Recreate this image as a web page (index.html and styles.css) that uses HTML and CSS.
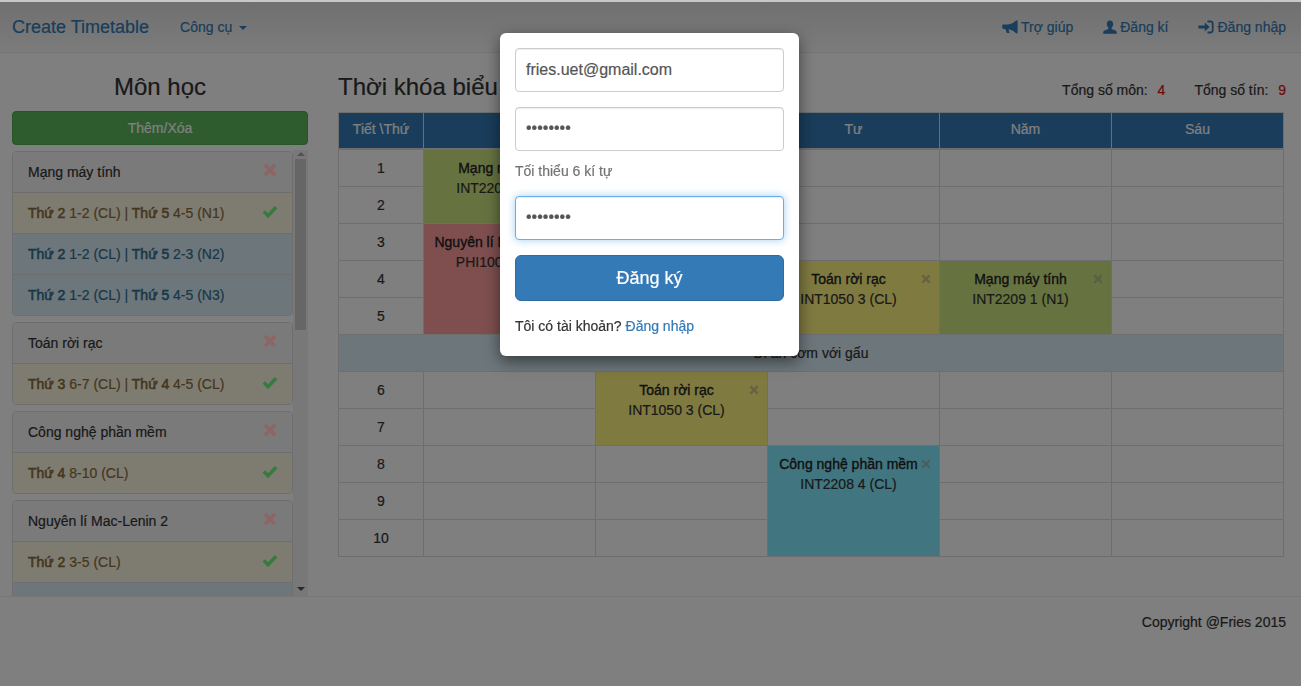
FILE: index.html
```html
<!DOCTYPE html>
<html lang="vi">
<head>
  <meta charset="UTF-8">
  <title>Create Timetable</title>
  <link rel="stylesheet" href="styles.css">
</head>
<body>
  <svg class="icon-defs" aria-hidden="true">
    <symbol id="i-remove" viewBox="0 0 14 14"><path d="M3.2 0.8 7 4.6 10.8 0.8 13.2 3.2 9.4 7 13.2 10.8 10.8 13.2 7 9.4 3.2 13.2 0.8 10.8 4.6 7 0.8 3.2Z"/></symbol>
    <symbol id="i-ok" viewBox="0 0 16 14"><path d="M0.6 7.6 3 5.2 6 8.2 12.8 1 15.4 3.4 6 13.2Z"/></symbol>
    <symbol id="i-bullhorn" viewBox="0 0 16 14"><path d="M14 0.6h1.6v12.6H14C12 11 9 9.4 6.4 9.2L7.6 13H4.8L3.4 9H1.6C0.7 9 0.2 8.2 0.2 7V6.2C0.2 5 0.7 4.4 1.6 4.4H6C9 4.4 12 2.8 14 0.6Z"/></symbol>
    <symbol id="i-user" viewBox="0 0 14 14"><path d="M7 0.4C9 0.4 10.2 2 10.2 4 10.2 5.8 9.2 7.2 8.6 7.8V9C10 9.6 13.6 10.4 13.8 12.2V13.8H0.2V12.2C0.4 10.4 4 9.6 5.4 9V7.8C4.8 7.2 3.8 5.8 3.8 4 3.8 2 5 0.4 7 0.4Z"/></symbol>
    <symbol id="i-login" viewBox="0 0 16 14"><path d="M9.5 0.6h3.2C14.4 0.6 15.6 1.8 15.6 3.4v7.2c0 1.6-1.2 2.8-2.9 2.8H9.5v-1.8h3c0.8 0 1.3-.5 1.3-1.2V3.6c0-.7-.5-1.2-1.3-1.2h-3ZM6.8 2.6 11.6 7 6.8 11.4V8.6H0.4V5.4h6.4Z"/></symbol>
  </svg>

  <nav class="navbar">
    <a class="brand">Create Timetable</a>
    <a class="nav-link tools">Công cụ <span class="caret"></span></a>
    <div class="nav-right">
      <a class="nav-link"><svg class="nav-icon"><use href="#i-bullhorn"/></svg> Trợ giúp</a>
      <a class="nav-link"><svg class="nav-icon user"><use href="#i-user"/></svg> Đăng kí</a>
      <a class="nav-link"><svg class="nav-icon"><use href="#i-login"/></svg> Đăng nhập</a>
    </div>
  </nav>

  <main class="main">
    <aside class="sidebar">
      <h3 class="sidebar-title">Môn học</h3>
      <button class="btn-add">Thêm/Xóa</button>
      <div class="course-scroll">
        <div class="course-list">
          <div class="course">
            <div class="course-head">Mạng máy tính <svg class="ic-remove"><use href="#i-remove"/></svg></div>
            <div class="course-item warn"><span><b>Thứ 2</b> 1-2 (CL) | <b>Thứ 5</b> 4-5 (N1)</span> <svg class="ic-ok"><use href="#i-ok"/></svg></div>
            <div class="course-item info"><span><b>Thứ 2</b> 1-2 (CL) | <b>Thứ 5</b> 2-3 (N2)</span></div>
            <div class="course-item info"><span><b>Thứ 2</b> 1-2 (CL) | <b>Thứ 5</b> 4-5 (N3)</span></div>
          </div>
          <div class="course">
            <div class="course-head">Toán rời rạc <svg class="ic-remove"><use href="#i-remove"/></svg></div>
            <div class="course-item warn"><span><b>Thứ 3</b> 6-7 (CL) | <b>Thứ 4</b> 4-5 (CL)</span> <svg class="ic-ok"><use href="#i-ok"/></svg></div>
          </div>
          <div class="course">
            <div class="course-head">Công nghệ phần mềm <svg class="ic-remove"><use href="#i-remove"/></svg></div>
            <div class="course-item warn"><span><b>Thứ 4</b> 8-10 (CL)</span> <svg class="ic-ok"><use href="#i-ok"/></svg></div>
          </div>
          <div class="course">
            <div class="course-head">Nguyên lí Mac-Lenin 2 <svg class="ic-remove"><use href="#i-remove"/></svg></div>
            <div class="course-item warn"><span><b>Thứ 2</b> 3-5 (CL)</span> <svg class="ic-ok"><use href="#i-ok"/></svg></div>
            <div class="course-item info"></div>
          </div>
        </div>
        <div class="scrollbar">
          <span class="arrow-up"></span>
          <span class="thumb"></span>
          <span class="arrow-down"></span>
        </div>
      </div>
    </aside>

    <section class="timetable">
      <div class="timetable-top">
        <h3 class="timetable-title">Thời khóa biểu</h3>
        <div class="totals">
          <span>Tổng số môn: <em>4</em></span>
          <span>Tổng số tín: <em>9</em></span>
        </div>
      </div>
      <table class="table">
        <colgroup>
          <col class="col-period">
          <col><col><col><col><col>
        </colgroup>
        <thead>
          <tr><th>Tiết \Thứ</th><th>Hai</th><th>Ba</th><th>Tư</th><th>Năm</th><th>Sáu</th></tr>
        </thead>
        <tbody>
          <tr>
            <td>1</td>
            <td rowspan="2" class="slot green"><div class="slot-body"><div class="slot-text"><strong>Mạng máy tính</strong><br>INT2209 1 (CL)</div><svg class="ic-close"><use href="#i-remove"/></svg></div></td>
            <td></td><td></td><td></td><td></td>
          </tr>
          <tr><td>2</td><td></td><td></td><td></td><td></td></tr>
          <tr>
            <td>3</td>
            <td rowspan="3" class="slot red"><div class="slot-body"><div class="slot-text"><strong>Nguyên lí Mac-Lenin 2</strong><br>PHI1005 5 (CL)</div><svg class="ic-close"><use href="#i-remove"/></svg></div></td>
            <td></td><td></td><td></td><td></td>
          </tr>
          <tr>
            <td>4</td>
            <td></td>
            <td rowspan="2" class="slot yellow"><div class="slot-body"><div class="slot-text"><strong>Toán rời rạc</strong><br>INT1050 3 (CL)</div><svg class="ic-close"><use href="#i-remove"/></svg></div></td>
            <td rowspan="2" class="slot green"><div class="slot-body"><div class="slot-text"><strong>Mạng máy tính</strong><br>INT2209 1 (N1)</div><svg class="ic-close"><use href="#i-remove"/></svg></div></td>
            <td></td>
          </tr>
          <tr><td>5</td><td></td><td></td></tr>
          <tr><td colspan="6" class="lunch">Đi ăn cơm với gấu</td></tr>
          <tr>
            <td>6</td>
            <td></td>
            <td rowspan="2" class="slot yellow"><div class="slot-body"><div class="slot-text"><strong>Toán rời rạc</strong><br>INT1050 3 (CL)</div><svg class="ic-close"><use href="#i-remove"/></svg></div></td>
            <td></td><td></td><td></td>
          </tr>
          <tr><td>7</td><td></td><td></td><td></td><td></td></tr>
          <tr>
            <td>8</td>
            <td></td><td></td>
            <td rowspan="3" class="slot cyan"><div class="slot-body"><div class="slot-text"><strong>Công nghệ phần mềm</strong><br>INT2208 4 (CL)</div><svg class="ic-close"><use href="#i-remove"/></svg></div></td>
            <td></td><td></td>
          </tr>
          <tr><td>9</td><td></td><td></td><td></td><td></td></tr>
          <tr><td>10</td><td></td><td></td><td></td><td></td></tr>
        </tbody>
      </table>
    </section>
  </main>

  <footer class="footer">Copyright @Fries 2015</footer>

  <div class="backdrop"></div>

  <form class="modal">
    <input class="field" type="email" value="fries.uet@gmail.com">
    <input class="field secret" type="password" value="12345678">
    <p class="help">Tối thiểu 6 kí tự</p>
    <input class="field secret focused" type="password" value="12345678">
    <button class="btn-submit" type="button">Đăng ký</button>
    <p class="switch">Tôi có tài khoản? <a>Đăng nhập</a></p>
  </form>
</body>
</html>
```

FILE: styles.css
```css
* {
  box-sizing: border-box;
}
html, body {
  height: 686px;
  overflow: hidden;
}
body {
  margin: 0;
  font-family: "Liberation Sans", Arial, sans-serif;
  font-size: 14px;
  line-height: 20px;
  color: #333;
  background: #fff;
  -webkit-text-stroke: .2px;
}
.icon-defs {
  display: none;
}
a {
  color: #337ab7;
  text-decoration: none;
}

/* navbar */
.navbar {
  display: flex;
  align-items: center;
  height: 53px;
  padding: 0 15px 0 12px;
  background: linear-gradient(#e0e0e0, #f8f8f8);
  border-top: 2px solid #c8c8c8;
  border-bottom: 1px solid #e7e7e7;
}
.brand {
  font-size: 18px;
  margin-right: 31px;
}
.nav-right {
  display: flex;
  gap: 30px;
  margin-left: auto;
}
.nav-link {
  display: flex;
  align-items: center;
  gap: 3px;
}
.tools {
  gap: 7px;
}
.caret {
  width: 0;
  height: 0;
  margin-top: 2px;
  border-top: 4px solid #337ab7;
  border-left: 4px solid transparent;
  border-right: 4px solid transparent;
}
.nav-icon {
  width: 16px;
  height: 14px;
  fill: #337ab7;
}
.nav-icon.user {
  width: 14px;
}

/* layout */
.main {
  display: flex;
  height: 544px;
  padding: 0 15px 0 12px;
  gap: 30px;
  border-bottom: 1px solid #eee;
}
.sidebar {
  display: flex;
  flex-direction: column;
  width: 296px;
  flex: none;
  height: 100%;
}
.sidebar-title {
  margin: 21px 0 11px;
  font-size: 24px;
  line-height: 26px;
  font-weight: 400;
  text-align: center;
}
.btn-add {
  height: 34px;
  flex: none;
  border: 1px solid #4cae4c;
  border-radius: 4px;
  background: #5cb85c;
  color: #fff;
  font: 14px/20px "Liberation Sans", Arial, sans-serif;
}

/* course list */
.course-scroll {
  display: flex;
  flex: 1;
  min-height: 0;
  margin-top: 5px;
}
.course-list {
  flex: 1;
  overflow: hidden;
  padding-top: 1px;
}
.course {
  margin-bottom: 6px;
  border: 1px solid #ddd;
  border-radius: 4px;
  overflow: hidden;
}
.course-head, .course-item {
  display: flex;
  align-items: center;
  justify-content: space-between;
  height: 41px;
  padding: 0 15px;
}
.course-head {
  background: #f5f5f5;
  border-bottom: 1px solid #ddd;
}
.course-item {
  border-bottom: 1px solid #ddd;
}
.course-item:last-child {
  height: 40px;
  border-bottom: 0;
}
.course-item b {
  font-weight: 400;
  -webkit-text-stroke: .55px;
}
.warn {
  background: #fcf8e3;
  color: #8a6d3b;
}
.info {
  background: #d9edf7;
  color: #31708f;
}
.ic-remove, .ic-ok, .ic-close {
  position: relative;
  z-index: 2; /* these stay bright through the backdrop in the original */
}
.ic-remove {
  width: 14px;
  height: 14px;
  margin-top: -4px;
  fill: #8f6464;
}
.ic-ok {
  width: 16px;
  height: 14px;
  margin: -3px -1px 0 0;
  fill: #357a3f;
}

/* fake scrollbar, the native one is hidden in headless mode */
.scrollbar {
  display: flex;
  flex-direction: column;
  align-items: center;
  width: 15px;
  flex: none;
  background: #f1f1f1;
}
.arrow-up, .arrow-down {
  flex: none;
  width: 0;
  height: 0;
  border-left: 4px solid transparent;
  border-right: 4px solid transparent;
}
.arrow-up {
  margin: 2px 0 3px;
  border-bottom: 4px solid #a3a3a3;
}
.arrow-down {
  margin: auto 0 5px;
  border-top: 4px solid #505050;
}
.thumb {
  width: 11px;
  height: 171px;
  background: #cdcdcd;
}

/* timetable */
.timetable {
  flex: 1;
  min-width: 0;
}
.timetable-top {
  display: flex;
  align-items: flex-end;
  justify-content: space-between;
  height: 58px;
}
.timetable-title {
  margin: 0 0 11px;
  font-size: 24px;
  line-height: 26px;
  font-weight: 400;
}
.totals {
  display: flex;
  gap: 29px;
  margin-bottom: 11px;
}
.totals em {
  font-style: normal;
  color: #d9141a;
  margin-left: 6px;
}
.table {
  width: 946px;
  table-layout: fixed;
  border-collapse: collapse;
  text-align: center;
  margin-top: 1px;
}
.col-period {
  width: 85px;
}
.table th {
  height: 36px;
  padding: 6px 8px 8px;
  font-weight: 400;
  color: #fff;
  background: #337ab7;
  border: 1px solid #ddd;
  border-bottom-width: 2px;
}
.table td {
  height: 37px;
  padding: 8px;
  vertical-align: top;
  border: 1px solid #ddd;
}
.table .lunch {
  background: #d9edf7;
}
.slot {
  border-color: transparent;
}
.green { background: #cde680; }
.red { background: #ff9e9e; }
.yellow { background: #fff480; }
.cyan { background: #82eaff; }
.slot-body {
  display: flex;
  align-items: flex-start;
}
.slot-text {
  flex: 1;
  min-width: 0;
}
.slot-text strong {
  font-weight: 400;
  color: #222;
  -webkit-text-stroke: .35px;
}
.ic-close {
  flex: none;
  width: 10px;
  height: 10px;
  margin-top: 5px;
  fill: rgba(80, 80, 70, .55);
}

/* footer */
.footer {
  padding: 15px 15px;
  text-align: right;
}

/* signup dialog */
.backdrop {
  position: fixed;
  inset: 2px 0 0;
  z-index: 1;
  background: rgba(0, 0, 0, .5);
}
.modal {
  position: absolute;
  z-index: 3;
  left: 500px;
  top: 33px;
  width: 299px;
  height: 323px;
  padding: 15px;
  background: #fff;
  border-radius: 6px;
  box-shadow: 0 5px 15px rgba(0, 0, 0, .5);
}
.field {
  display: block;
  width: 100%;
  height: 44px;
  margin-bottom: 15px;
  padding: 10px;
  font: 16px "Liberation Sans", Arial, sans-serif;
  color: #555;
  border: 1px solid #ccc;
  border-radius: 4px;
  box-shadow: inset 0 1px 1px rgba(0, 0, 0, .075);
  outline: none;
}
.field.secret {
  padding: 8px 10px 10px;
}
.field.focused {
  border-color: #66afe9;
  box-shadow: inset 0 1px 1px rgba(0, 0, 0, .075), 0 0 8px rgba(102, 175, 233, .6);
}
.help {
  margin: -5px 0 15px;
  color: #737373;
}
.btn-submit {
  display: block;
  width: 100%;
  height: 46px;
  border: 1px solid #2e6da4;
  border-radius: 6px;
  background: #337ab7;
  color: #fff;
  font: 18px "Liberation Sans", Arial, sans-serif;
}
.switch {
  margin: 15px 0 0;
}
```
